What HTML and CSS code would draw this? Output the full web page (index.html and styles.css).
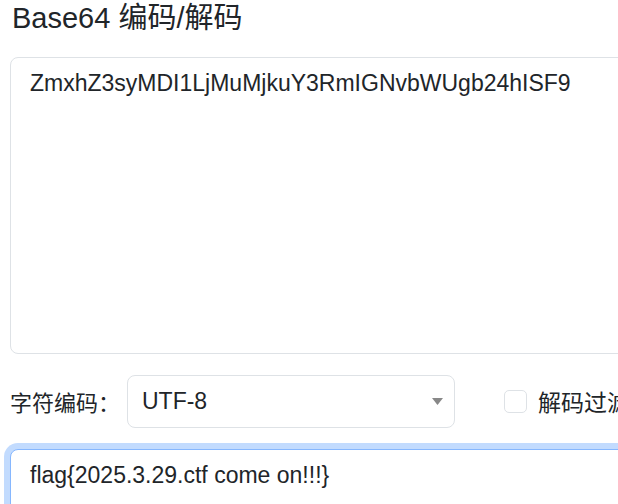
FILE: index.html
```html
<!DOCTYPE html>
<html lang="zh-CN">
<head>
  <meta charset="UTF-8">
  <meta name="viewport" content="width=device-width, initial-scale=1.0">
  <title>Base64 编码/解码</title>
  <link rel="stylesheet" href="styles.css">
</head>
<body>
  <div class="container">
    <h1 class="title">Base64 编码/解码</h1>
    <textarea class="field field-source" id="source">ZmxhZ3syMDI1LjMuMjkuY3RmIGNvbWUgb24hISF9</textarea>

    <div class="options">
      <label class="option-label" for="charset">字符编码：</label>
      <div class="select-wrap">
        <select class="select" id="charset">
          <option>UTF-8</option>
          <option>GBK</option>
        </select>
        <svg class="select-caret" width="11" height="7" viewBox="0 0 11 7"><path d="M0 0h11L5.5 7z" fill="#888"/></svg>
      </div>
      <label class="check">
        <input type="checkbox" class="check-box">
        <span>解码过滤</span>
      </label>
    </div>

    <textarea class="field field-result is-focused" id="result">flag{2025.3.29.ctf come on!!!}</textarea>
  </div>
</body>
</html>
```

FILE: styles.css
```css
html, body {
  margin: 0;
  padding: 0;
  overflow: hidden;
  background: #fff;
}
body {
  font-family: "Liberation Sans", Arial, "Noto Sans CJK SC", sans-serif;
  color: #212529;
}
.container {
  width: 820px;
  padding: 0 10px;
}
.title {
  margin: 1px 0 21px 2px;
  font-size: 29px;
  font-weight: 400;
  line-height: 1.2;
}
.field {
  display: block;
  box-sizing: border-box;
  width: 100%;
  padding: 8px 19px;
  font-family: inherit;
  font-size: 23px;
  line-height: 1.5;
  color: #212529;
  border: 1px solid #dee2e6;
  border-radius: 8px;
  resize: none;
  outline: none;
  background: #fff;
}
.field-source {
  height: 297px;
}
.field-result {
  height: 90px;
}
.field.is-focused {
  border-color: #86b7fe;
  box-shadow: 0 0 0 6px #c2dbfe;
}
.options {
  display: flex;
  align-items: center;
  margin: 21px 0;
  white-space: nowrap;
}
.option-label {
  font-size: 22px;
  width: 117px;
}
.select-wrap {
  position: relative;
  width: 328px;
}
.select {
  display: block;
  box-sizing: border-box;
  width: 100%;
  height: 53px;
  padding: 0 40px 0 14px;
  font-family: inherit;
  font-size: 23px;
  color: #212529;
  background: #fff;
  border: 1px solid #dee2e6;
  border-radius: 8px;
  appearance: none;
  -webkit-appearance: none;
  outline: none;
}
.select-caret {
  position: absolute;
  right: 12px;
  top: 23px;
}
.check {
  display: flex;
  align-items: center;
  margin-left: 49px;
  font-size: 23px;
}
.check-box {
  appearance: none;
  -webkit-appearance: none;
  width: 23px;
  height: 23px;
  margin: 0 11px 0 0;
  border: 1px solid #dee2e6;
  border-radius: 5px;
  background: #fff;
}
```
